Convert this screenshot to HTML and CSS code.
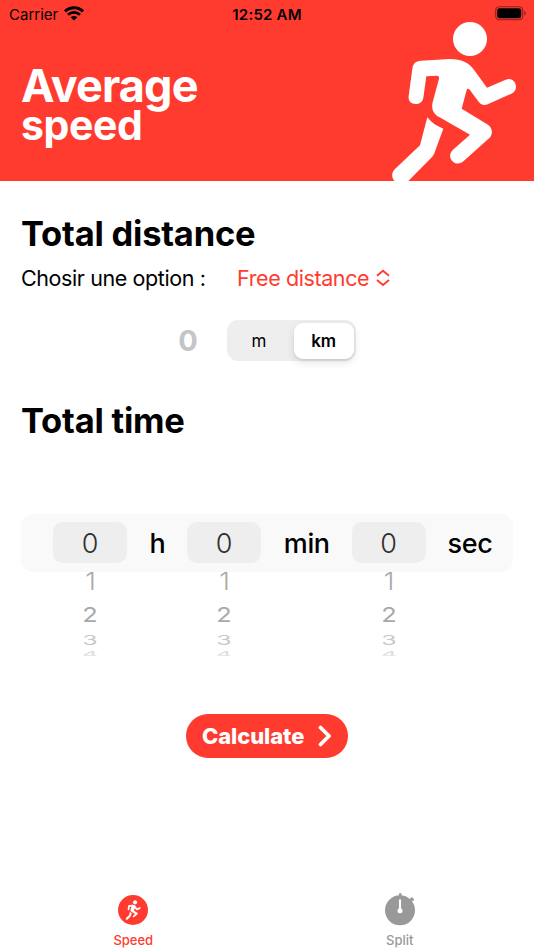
FILE: index.html
```html
<!DOCTYPE html>
<html lang="fr">
<head>
    <meta charset="UTF-8">
    <meta name="viewport" content="width=device-width, initial-scale=1.0">
    <title>Average speed</title>
    <link rel="stylesheet" href="styles.css">
</head>
<body>
    <svg width="0" height="0" class="symbols">
        <symbol id="runner" viewBox="0 0 462 565">
            <circle cx="270" cy="117" r="51"/>
            <path d="M122 182 L210 177 C244 177 266 187 284 212 L321 263 L377 239 C395 231 408 245 408 260 C408 270 403 277 394 281 L323 313 C312 317 303 314 296 305 L269 269 C266 265 261 265 260 270 L245 326 L324 374 C338 384 339 402 329 413 L251 483 C242 492 226 494 216 482 C207 471 209 459 219 449 L270 404 L179 352 C160 342 153 326 158 307 L177 236 C178 230 175 227 170 227 L139 229 L130 293 C128 306 118 312 107 312 C93 312 84 303 86 288 L97 206 C99 190 108 183 122 182 Z"/>
            <path d="M142 352 C155 369 171 379 190 386 L164 457 C162 463 160 467 156 471 L85 543 C73 555 50 554 41 540 C34 529 35 517 45 507 L120 436 Z"/>
        </symbol>
    </svg>
    <div class="screen">
        <header class="header">
            <div class="status-bar">
                <div class="carrier">
                    <span>Carrier</span>
                    <svg class="wifi" viewBox="0 0 20 15">
                        <path d="M1 5.4 C6 .5 14 .5 19 5.4" fill="none" stroke="#000" stroke-width="3.1"/>
                        <path d="M4 8.8 C7.5 5.6 12.5 5.6 16 8.8" fill="none" stroke="#000" stroke-width="2.7"/>
                        <path d="M6.7 11.2 C8.5 9.5 11.5 9.5 13.3 11.2 L10 14.5 Z"/>
                    </svg>
                </div>
                <div class="clock">12:52 AM</div>
                <div class="power">
                    <svg class="battery" viewBox="0 0 32 15">
                        <rect x=".7" y=".7" width="27" height="13.1" rx="3.6" fill="none" stroke="#000" stroke-opacity=".45" stroke-width="1.1"/>
                        <rect x="2.2" y="2.2" width="24" height="10.1" rx="2.3"/>
                        <path d="M29.3 5 C31.2 5.6 31.2 9 29.3 9.6 Z" opacity=".45"/>
                    </svg>
                </div>
            </div>
            <div class="title">
                <h1>Average</h1>
                <p>speed</p>
            </div>
            <svg class="runner"><use href="#runner"/></svg>
        </header>

        <main class="content">
            <h2 class="heading">Total distance</h2>
            <div class="option">
                <span class="option-label">Chosir une option :</span>
                <a class="option-menu">
                    <span>Free distance</span>
                    <svg class="chevrons" viewBox="0 0 14 18">
                        <path d="M1 6.7 L7 1.8 L13 6.7 M1 11.1 L7 16 L13 11.1"/>
                    </svg>
                </a>
            </div>
            <div class="distance">
                <span class="distance-value">0</span>
                <div class="segmented">
                    <div class="segment">m</div>
                    <div class="segment selected">km</div>
                </div>
            </div>

            <h2 class="heading time-heading">Total time</h2>
            <div class="picker">
                <div class="wheel">
                    <div class="current">0</div>
                    <div class="next n1">1</div>
                    <div class="next n2">2</div>
                    <div class="next n3">3</div>
                    <div class="next n4">4</div>
                </div>
                <div class="unit hours">h</div>
                <div class="wheel">
                    <div class="current">0</div>
                    <div class="next n1">1</div>
                    <div class="next n2">2</div>
                    <div class="next n3">3</div>
                    <div class="next n4">4</div>
                </div>
                <div class="unit minutes">min</div>
                <div class="wheel">
                    <div class="current">0</div>
                    <div class="next n1">1</div>
                    <div class="next n2">2</div>
                    <div class="next n3">3</div>
                    <div class="next n4">4</div>
                </div>
                <div class="unit seconds">sec</div>
            </div>

            <button class="calculate">
                <span>Calculate</span>
                <svg class="arrow" viewBox="0 0 14 22">
                    <path d="M2.5 2.5 L11 11 L2.5 19.5"/>
                </svg>
            </button>
        </main>

        <nav class="tab-bar">
            <a class="tab active">
                <svg class="tab-icon" viewBox="0 0 34 36">
                    <circle cx="17" cy="20" r="15" fill="#ff3b30"/>
                    <use href="#runner" x="8.2" y="7.6" width="18.6" height="22.8" fill="#fff"/>
                </svg>
                <span>Speed</span>
            </a>
            <a class="tab">
                <svg class="tab-icon" viewBox="0 0 34 36">
                    <circle cx="17" cy="20.3" r="15" fill="#999"/>
                    <path d="M17.3 4.3 V8 M26 11.5 L29.3 9" stroke="#999" stroke-width="2.6" stroke-linecap="round"/>
                    <path d="M28.3 8.2 L30.2 10" stroke="#999" stroke-width="1.8" stroke-linecap="round"/>
                    <path d="M17 10.3 V20" stroke="#fff" stroke-width="2.1" stroke-linecap="round"/>
                    <circle cx="17" cy="20.8" r="2.5" fill="#fff"/>
                </svg>
                <span>Split</span>
            </a>
        </nav>
    </div>
</body>
</html>
```
FILE: styles.css
```css
* {
    box-sizing: border-box;
    margin: 0;
    padding: 0;
}
body {
    background: #fff;
    color: #000;
    font-family: Inter, sans-serif;
}
.symbols {
    position: absolute;
}
.screen {
    display: flex;
    flex-direction: column;
    width: 534px;
    height: 950px;
    overflow: hidden;
}
.header {
    position: relative;
    display: flex;
    justify-content: space-between;
    height: 181px;
    padding-left: 21px;
    background: #ff3b30;
    overflow: hidden;
}
.status-bar {
    position: absolute;
    top: 0;
    left: 0;
    display: flex;
    align-items: center;
    width: 100%;
    height: 28px;
    padding: 0 7px 0 9px;
    font-size: 15px;
}
.carrier, .power {
    display: flex;
    flex: 1;
    align-items: center;
    gap: 6px;
}
.carrier svg, .power svg {
    margin-bottom: 1px;
}
.power {
    justify-content: flex-end;
}
.wifi {
    width: 20px;
    height: 15px;
}
.clock {
    padding-right: 2px;
    font-weight: 600;
    letter-spacing: 0.2px;
}
.battery {
    width: 32px;
    height: 15px;
}
.title {
    padding-top: 66px;
    color: #fff;
    font-weight: 700;
}
.title h1 {
    font-size: 45px;
    line-height: 39px;
    letter-spacing: -0.85px;
}
.title p {
    font-size: 41px;
    line-height: 40px;
    letter-spacing: -0.4px;
}
.runner {
    width: 154px;
    height: 188.33px;
    fill: #fff;
}
.content {
    display: flex;
    flex-direction: column;
    flex: 1;
    padding: 33px 21px 0;
}
.heading {
    font-size: 34.5px;
    line-height: 40px;
    font-weight: 700;
    letter-spacing: -0.22px;
}
.option {
    display: flex;
    align-items: center;
    height: 30px;
    margin-top: 9px;
    font-size: 21.5px;
    letter-spacing: -0.4px;
}
.option-label {
    width: 216px;
}
.option-menu {
    display: flex;
    align-items: center;
    gap: 7px;
    color: #ff3b30;
}
.chevrons {
    width: 14px;
    height: 18px;
    fill: none;
    stroke: #ff3b30;
    stroke-width: 1.9;
}
.distance {
    display: flex;
    align-items: center;
    gap: 29px;
    margin-top: 27px;
    padding-left: 157px;
}
.distance-value {
    width: 20px;
    color: #c5c5c7;
    font-size: 29px;
    font-weight: 700;
    text-align: center;
}
.segmented {
    display: flex;
    width: 129px;
    height: 41px;
    padding: 3px 2.5px 2px;
    background: #eee;
    border-radius: 11px;
    font-size: 17px;
}
.segment {
    display: flex;
    align-items: center;
    justify-content: center;
    width: 64px;
    padding-right: 5px;
}
.segment.selected {
    width: 60px;
    padding-right: 0;
    background: #fff;
    border-radius: 9px;
    box-shadow: 0 3px 8px rgba(0, 0, 0, 0.12), 0 2px 2px rgba(0, 0, 0, 0.05);
    font-weight: 600;
    letter-spacing: -0.3px;
}
.time-heading {
    margin-top: 40px;
}
.picker {
    display: flex;
    align-items: center;
    width: 492px;
    height: 58px;
    margin-top: 73px;
    padding-left: 32px;
    background: #f9f9f9;
    border-radius: 12px;
}
.wheel {
    flex-shrink: 0;
    width: 74px;
    height: 42px;
    font-size: 27px;
    text-align: center;
}
.current {
    height: 41px;
    background: #eee;
    border-radius: 10px;
    color: #303030;
    line-height: 43px;
    font-weight: 350;
}
.next {
    line-height: 20px;
    color: #a9a9a9;
    font-weight: 400;
}
.n1 {
    margin-top: 9px;
    padding-left: 1px;
    transform: scale(1, 0.9);
    font-weight: 350;
}
.n2 {
    margin-top: 13px;
    transform: scale(0.94, 0.75);
}
.n3 {
    margin-top: 5px;
    color: #c8c8c8;
    transform: scale(0.92, 0.5);
}
.n4 {
    height: 20px;
    margin-top: -6px;
    color: #dcdcdc;
    transform: scale(0.92, 0.3);
    clip-path: inset(0 0 4px 0);
}
.unit {
    flex-shrink: 0;
    font-size: 27px;
    font-weight: 500;
    text-align: center;
    letter-spacing: -0.4px;
}
.hours {
    width: 60px;
    padding-left: 1px;
}
.minutes {
    width: 90.5px;
    padding-left: 1px;
}
.seconds {
    width: 89px;
}
.calculate {
    display: flex;
    align-items: center;
    align-self: center;
    justify-content: space-between;
    width: 162px;
    height: 44px;
    margin-top: 141.5px;
    padding: 0 16px;
    background: #ff3b30;
    border: none;
    border-radius: 22px;
    color: #fff;
    font-family: inherit;
    font-size: 22px;
    font-weight: 800;
    letter-spacing: -0.1px;
}
.arrow {
    width: 14px;
    height: 22px;
    fill: none;
    stroke: #fff;
    stroke-width: 3.8;
    stroke-linecap: round;
    stroke-linejoin: round;
}
.tab-bar {
    display: flex;
    width: 533px;
    height: 60px;
}
.tab {
    display: flex;
    flex: 1;
    flex-direction: column;
    align-items: center;
    gap: 6px;
    color: #999;
    font-size: 13px;
    line-height: 16px;
    font-weight: 500;
}
.tab.active {
    color: #ff3b30;
}
.tab-icon {
    width: 34px;
    height: 36px;
}
```
